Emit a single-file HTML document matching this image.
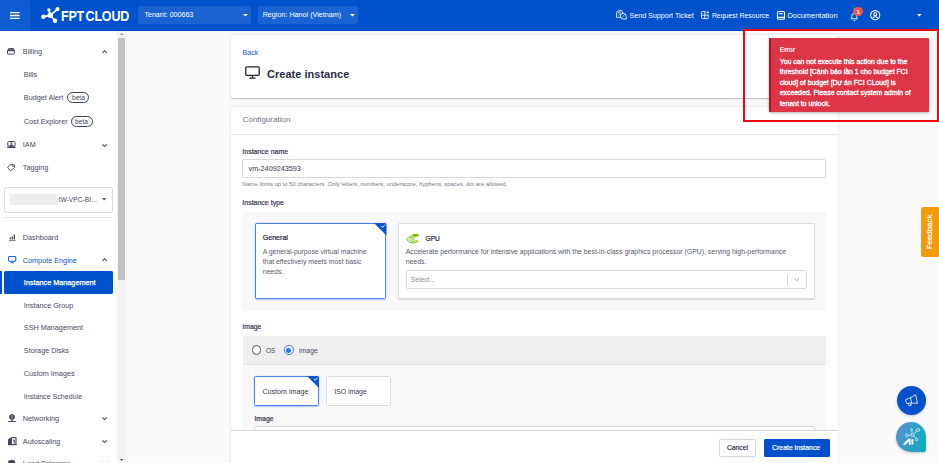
<!DOCTYPE html>
<html>
<head>
<meta charset="utf-8">
<title>Create instance</title>
<style>
*{box-sizing:border-box;margin:0;padding:0}
html,body{width:939px;height:463px;overflow:hidden;background:#fafafa;font-family:"Liberation Sans",sans-serif;}
body{position:relative}
.a{position:absolute}
.t{position:absolute;white-space:nowrap;line-height:10px;font-size:7.25px;color:#474a5d}
.w{color:#fff}
.b{font-weight:bold}
.m{-webkit-text-stroke:.2px}
svg{position:absolute;overflow:visible}
/* header */
#hdr{left:0;top:0;width:939px;height:30.5px;background:#0052cc}
#ham{left:0;top:0;width:30px;height:30.5px;background:#0f5dd0}
.dd{background:#1a63d1;border-radius:2px}
/* sidebar */
#side{left:0;top:30.5px;width:117.500px;height:433px;background:#fff}
#sb{left:117.300px;top:30.5px;width:9.700px;height:433px;background:#f3f3f3}
#sbt{left:118px;top:37.500px;width:7px;height:242.500px;background:#c2c2c2}
.beta{position:absolute;border:0.8px solid #3f4254;border-radius:6px;height:11px;width:22px;font-size:6.6px;line-height:9px;text-align:center;color:#3f4254}
/* cards */
.card{position:absolute;background:#fff;box-shadow:0 0.5px 1.5px rgba(0,0,0,.26);border-radius:2px}
</style>
</head>
<body>

<!-- ================= HEADER ================= -->
<div id="hdr" class="a"></div>
<div id="ham" class="a"></div>
<svg style="left:10.2px;top:11.8px" width="9.6" height="7" viewBox="0 0 9.6 7"><path d="M0 .7h9.6M0 3.5h9.6M0 6.3h9.6" stroke="#fff" stroke-width="1.3" fill="none"/></svg>

<!-- logo -->
<svg style="left:40px;top:6px" width="22" height="19" viewBox="40 6 22 19">
  <g stroke="#fff" stroke-width="1.7" fill="none" stroke-linecap="round">
    <path d="M50.3 15.3L48.9 10M50.3 15.3L57.5 9.1M50.3 15.3L43.4 16.7M50.3 15.3L55.1 20.7"/>
  </g>
  <g fill="#fff">
    <circle cx="50.3" cy="15.3" r="2.7"/><circle cx="48.9" cy="10" r="1.7"/><circle cx="57.5" cy="9.1" r="2.1"/>
    <circle cx="43.4" cy="16.7" r="2.2"/><circle cx="55.1" cy="20.7" r="2.2"/>
  </g>
</svg>
<div class="t w b" id="logo" style="left:61px;top:8.200px;font-size:13.9px;line-height:16px;letter-spacing:-0.2px;word-spacing:-2px;transform-origin:0 50%;transform:scaleX(.9)">FPT CLOUD</div>

<div class="a dd" style="left:138px;top:6.2px;width:113px;height:18.2px"></div>
<div class="t w" style="left:144.4px;top:10.300px;font-size:7.1px">Tenant: 000663</div>
<svg style="left:243.2px;top:14px" width="4.8" height="2.6" viewBox="0 0 4.8 2.6"><path d="M0 0h4.8L2.4 2.6z" fill="#fff"/></svg>
<div class="a dd" style="left:257.5px;top:6.2px;width:100.5px;height:18.2px"></div>
<div class="t w" style="left:262.7px;top:10.2px;font-size:7.18px">Region: Hanoi (Vietnam)</div>
<svg style="left:349.7px;top:14px" width="4.8" height="2.6" viewBox="0 0 4.8 2.6"><path d="M0 0h4.8L2.4 2.6z" fill="#fff"/></svg>

<!-- header right -->
<svg style="left:615.700px;top:10.200px" width="10.700" height="9.300" viewBox="0 0 11.500 10" fill="none" stroke="#fff" stroke-width=".9" stroke-linejoin="round" stroke-linecap="round">
  <path d="M5 7.900H.6V3.900a3.500 3.500 0 0 1 6.900-.9"/><path d="M10.900 9.700H7.800a3.100 3.100 0 1 1 3.100-3.100z" fill="#0052cc"/><path d="M2.300 3.300a1.200 1.200 0 1 1 1.700 1.100c-.4.200-.5.500-.5 1" stroke-width=".8"/><path d="M7.200 7.600l1.800-2.800" stroke-width=".7" stroke-opacity=".8"/>
</svg>
<div class="t w" style="left:629.5px;top:11.100px;font-size:7.14px">Send Support Ticket</div>
<svg style="left:701.4px;top:11px" width="8.2" height="8" viewBox="0 0 8.2 8" fill="none" stroke="#fff" stroke-width=".85">
  <path d="M4.6.6H1.2a.7.7 0 0 0-.7.7v5.6a.7.7 0 0 0 .7.7h5.4a.7.7 0 0 0 .7-.7V3.6M3.8.6v7M.5 4.2h6.8M5.6 1.4h2.4M6.8.2v2.4"/>
</svg>
<div class="t w" style="left:711.9px;top:11.100px;font-size:6.900px">Request Resource</div>
<svg style="left:777.1px;top:10.9px" width="8" height="8.8" viewBox="0 0 8 8.8" fill="none" stroke="#fff" stroke-width="1.100">
  <rect x=".5" y=".5" width="7" height="7.8" rx="1"/><path d="M.5 6.4h7M2.4 2.6h3.2"/>
</svg>
<div class="t w" style="left:787.5px;top:11.100px;font-size:7.450px">Documentation</div>
<!-- bell -->
<svg style="left:850px;top:11.6px" width="8.6" height="9" viewBox="0 0 8.6 9" fill="none" stroke="#fff" stroke-width=".9">
  <path d="M1 6.8c.9-.8.9-1.700.9-3a2.400 2.400 0 0 1 4.800 0c0 1.300 0 2.200.9 3z"/><path d="M3.400 8.200a1 1 0 0 0 1.800 0"/>
</svg>
<div class="a" style="left:853.400px;top:6.900px;width:9.600px;height:9.600px;border-radius:50%;background:#ef5350"></div>
<div class="t w b" style="left:853.400px;top:6.800px;width:9.600px;text-align:center;font-size:6.200px">1</div>
<!-- user -->
<svg style="left:869.900px;top:10.100px" width="10.400" height="10.400" viewBox="0 0 10 10" fill="none" stroke="#fff" stroke-width="1.050">
  <circle cx="5" cy="5" r="4.4"/><circle cx="5" cy="4" r="1.4"/><path d="M2.300 8.200a3 3 0 0 1 5.400 0"/>
</svg>
<svg style="left:916.6px;top:14.1px" width="4.6" height="2.6" viewBox="0 0 4.6 2.6"><path d="M0 0h4.600L2.300 2.600z" fill="#fff"/></svg>

<!-- ================= SIDEBAR ================= -->
<div id="side" class="a"></div>
<div id="sb" class="a"></div>
<div id="sbt" class="a"></div>
<svg style="left:119.700px;top:33px" width="3.4" height="2" viewBox="0 0 3.4 2"><path d="M0 2h3.400L1.700 0z" fill="#888"/></svg>
<svg style="left:119.8px;top:459px" width="3.4" height="2" viewBox="0 0 3.4 2"><path d="M0 0h3.400L1.700 2z" fill="#555"/></svg>

<!-- Billing -->
<svg style="left:7px;top:47.800px" width="8" height="6.600" viewBox="0 0 8 6.600" fill="none" stroke="#3f4254" stroke-width="1">
  <rect x=".55" y="1.900" width="6.900" height="4.200" rx=".7"/><path d="M1.700 1.900V.55h4.600V1.900"/><path d="M.5 2.500h7" stroke-width="1.300"/>
</svg>
<div class="t" style="left:22.8px;top:47.300px">Billing</div>
<svg style="left:101.900px;top:50.200px" width="5.200" height="3.200" viewBox="0 0 5.2 3.200" fill="none" stroke="#3d4163" stroke-width="1.100"><path d="M.4 2.900L2.600.700 4.800 2.900"/></svg>
<div class="t" style="left:23.800px;top:70.100px">Bills</div>
<div class="t" style="left:23.800px;top:92.800px">Budget Alert</div>
<div class="beta" style="left:67.400px;top:92.300px">beta</div>
<div class="t" style="left:23.800px;top:116.500px">Cost Explorer</div>
<div class="beta" style="left:70.500px;top:116.400px">beta</div>
<!-- IAM -->
<svg style="left:7.100px;top:140.900px" width="8.800" height="7.400" viewBox="0 0 8.800 7.400" fill="none" stroke="#3f4254" stroke-width="1">
  <rect x=".8" y=".5" width="7.200" height="4.700" rx=".8"/><circle cx="4.400" cy="2.100" r=".95" fill="#3f4254" stroke="none"/><path d="M2.600 5a1.800 1.800 0 0 1 3.600 0z" fill="#3f4254" stroke="none"/><path d="M.3 6.300h8.200" stroke-width="1.500"/>
</svg>
<div class="t" style="left:22.800px;top:140.300px">IAM</div>
<svg style="left:101.900px;top:143.600px" width="5.200" height="3.200" viewBox="0 0 5.200 3.200" fill="none" stroke="#3d4163" stroke-width="1.100"><path d="M.4.400L2.600 2.600 4.800.4"/></svg>
<!-- Tagging -->
<svg style="left:7px;top:164.300px" width="8" height="7.400" viewBox="0 0 8 7.400" fill="none" stroke="#3f4254" stroke-width=".9">
  <path d="M3.400.800L7.300.5l.1 3.300-3.900 3.100L.6 3.400z"/><circle cx="5.800" cy="2" r=".4"/>
</svg>
<div class="t" style="left:22.800px;top:163.400px">Tagging</div>
<!-- project box -->
<div class="a" style="left:3.900px;top:187px;width:109.400px;height:26px;border:.8px solid #dcdce0;border-radius:2px;background:#fff"></div>
<div class="a" style="left:9.800px;top:193.500px;width:48.500px;height:11.700px;background:#ededed"></div>
<div class="t" style="left:58.600px;top:195.000px;font-size:6.700px">tW-VPC-BI...</div>
<svg style="left:101.900px;top:198.400px" width="4.400" height="2.400" viewBox="0 0 4.400 2.400"><path d="M0 0h4.400L2.200 2.400z" fill="#555866"/></svg>
<div class="a" style="left:3.900px;top:217px;width:109.400px;height:.8px;background:#e6e6ea"></div>
<!-- Dashboard -->
<svg style="left:8.500px;top:234px" width="6.600" height="7" viewBox="0 0 6.600 7" fill="none" stroke="#3f4254" stroke-width="1">
  <path d="M1.300 5.600V3.600M3.300 5.600V2.200M5.300 5.600V.6" stroke-width="1.250"/><path d="M0 6.600h6.600" stroke-width=".7"/>
</svg>
<div class="t" style="left:22.800px;top:232.900px">Dashboard</div>
<!-- Compute Engine -->
<svg style="left:7.600px;top:256.300px" width="8.400" height="7.400" viewBox="0 0 9 8" fill="none" stroke="#1c62d6" stroke-width="1.100">
  <rect x=".6" y=".6" width="7.800" height="5" rx=".8"/><path d="M2.800 7.400h3.400M4.500 5.600v1.800"/>
</svg>
<div class="t" style="left:22.800px;top:255.800px;color:#0a55cf">Compute Engine</div>
<svg style="left:101.900px;top:258.200px" width="5.200" height="3.200" viewBox="0 0 5.200 3.200" fill="none" stroke="#3d4163" stroke-width="1.100"><path d="M.4 2.900L2.600.700 4.800 2.900"/></svg>
<!-- active -->
<div class="a" style="left:0;top:271.400px;width:1.800px;height:22.700px;background:#0052cc"></div>
<div class="a" style="left:3.900px;top:271.400px;width:109.400px;height:22.700px;background:#0052cc;border-radius:1.500px"></div>
<div class="t w" style="left:23.800px;top:278.400px;font-size:7.250px;-webkit-text-stroke:.25px #fff">Instance Management</div>
<div class="t" style="left:23.800px;top:300.900px">Instance Group</div>
<div class="t" style="left:23.800px;top:323.400px">SSH Management</div>
<div class="t" style="left:23.800px;top:346.100px">Storage Disks</div>
<div class="t" style="left:23.800px;top:368.600px">Custom Images</div>
<div class="t" style="left:23.800px;top:391.900px;font-size:7.100px">Instance Schedule</div>
<!-- Networking -->
<svg style="left:7.600px;top:414.300px" width="8" height="8.200" viewBox="0 0 8 8.200" fill="none" stroke="#3f4254" stroke-width=".9">
  <circle cx="4" cy="3" r="2.500" fill="#3f4254"/><path d="M4 1.200v3.400" stroke="#fff" stroke-width=".7"/><path d="M4 5.500v1.700" stroke-width="1.100"/><path d="M.2 7.500h7.600" stroke-width="1"/>
</svg>
<div class="t" style="left:22.800px;top:414.000px">Networking</div>
<svg style="left:101.900px;top:417.400px" width="5.200" height="3.200" viewBox="0 0 5.200 3.200" fill="none" stroke="#3d4163" stroke-width="1.100"><path d="M.4.400L2.600 2.600 4.800.4"/></svg>
<!-- Autoscaling -->
<svg style="left:7.600px;top:437.200px" width="8.600" height="8.200" viewBox="0 0 8.600 8.200">
  <path d="M0 2.400L3.200.2v7.600H0z" fill="#3f4254"/><rect x="3.300" y=".7" width="4.700" height="6.800" fill="none" stroke="#3f4254" stroke-width="1.100"/><path d="M4.800 3.100h1.500v3.400" fill="none" stroke="#3f4254" stroke-width="1"/><path d="M0 7.700h8.600" stroke="#3f4254" stroke-width="1"/>
</svg>
<div class="t" style="left:22.800px;top:436.800px">Autoscaling</div>
<svg style="left:101.900px;top:440.200px" width="5.200" height="3.200" viewBox="0 0 5.200 3.200" fill="none" stroke="#3d4163" stroke-width="1.100"><path d="M.4.400L2.600 2.600 4.800.4"/></svg>
<!-- Load Balancer (cut off) -->
<svg style="left:7.800px;top:460.200px" width="7.400" height="8" viewBox="0 0 7.400 8" fill="#3f4254"><circle cx="1.600" cy="1.500" r="1.300"/><circle cx="3.700" cy="1" r="1.300"/><circle cx="5.800" cy="1.500" r="1.300"/><rect x=".4" y="1.800" width="6.600" height="4"/></svg>
<div class="t" style="left:22.800px;top:459.300px">Load Balancer</div>
<svg style="left:101.900px;top:462.400px" width="5.200" height="3.200" viewBox="0 0 5.200 3.200" fill="none" stroke="#9a9ca8" stroke-width="1"><path d="M.4.400L2.600 2.600 4.800.4"/></svg>

<!-- ================= MAIN ================= -->
<!-- card 1 -->
<div class="card" style="left:231px;top:35px;width:607px;height:62.500px"></div>
<div class="t" style="left:242.600px;top:48px;color:#0a55cf;font-size:7.100px">Back</div>
<svg style="left:245px;top:66.300px" width="15" height="13" viewBox="0 0 15 13" fill="none" stroke="#26272c" stroke-width="1.300">
  <rect x=".8" y=".8" width="13.400" height="8.600" rx="1"/><path d="M4.400 12.200h6.200M7.500 9.400v2.800"/>
</svg>
<div class="t b" style="left:267px;top:66.900px;font-size:11.050px;line-height:15px;color:#2a2e44">Create instance</div>

<!-- card 2 -->
<div class="card" style="left:231px;top:106.700px;width:607px;height:370px"></div>
<div class="t" style="left:242.600px;top:115px;font-size:8.050px;color:#70737f">Configuration</div>
<div class="a" style="left:231px;top:133.800px;width:607px;height:.8px;background:#e9e9ec"></div>

<div class="t m" style="left:242.300px;top:146.800px;font-size:7px;color:#33364a">Instance name</div>
<div class="a" style="left:242.300px;top:159.400px;width:584px;height:18.300px;border:.8px solid #d7d7dc;border-radius:1.500px;background:#fff"></div>
<div class="t" style="left:248.500px;top:164.100px;font-size:7.260px;color:#33364a">vm-2409243593</div>
<div class="t" style="left:242.300px;top:179.300px;font-size:5.850px;color:#777a86">Name limits up to 50 characters. Only letters, numbers, underscore, hyphens, spaces, dot are allowed.</div>
<div class="t m" style="left:242.300px;top:197.600px;font-size:7px;color:#33364a">Instance type</div>

<!-- instance type panel -->
<div class="a" style="left:242.800px;top:211.500px;width:583.500px;height:99.500px;background:#f8f8f8"></div>
<div class="a" style="left:255px;top:223.300px;width:131px;height:75.700px;border:.9px solid #4a82e4;border-radius:1.500px;background:#fff;box-shadow:0 .5px 1.500px rgba(11,79,211,.3)"></div>
<svg style="left:373.500px;top:223.300px" width="12.500" height="12.500" viewBox="0 0 11 11"><path d="M0 0h9.500a1.500 1.500 0 0 1 1.500 1.500V11z" fill="#0a55cf"/><path d="M6.400 2.700l1.200 1.200 2-2.400" fill="none" stroke="#fff" stroke-width=".8"/></svg>
<div class="t m" style="left:262.700px;top:232.900px;font-size:7.100px;color:#23263a">General</div>
<div class="t" style="left:262.700px;top:247.300px;font-size:6.850px;line-height:9.750px;color:#565968">A general-purpose virtual machine<br>that effectively meets most basic<br>needs.</div>

<div class="a" style="left:397.500px;top:223.300px;width:417.300px;height:75.500px;border:.8px solid #dcdce0;border-radius:1.500px;background:#fff;box-shadow:0 .5px 1px rgba(0,0,0,.12)"></div>
<!-- nvidia-like icon -->
<svg style="left:405.600px;top:233.700px" width="12.800" height="9.600" viewBox="0 0 12.800 9.600" fill="none" stroke="#76b900">
  <path d="M7 0h5.400v2.400H7z" fill="#76b900" stroke="none"/>
  <path d="M12.300 1.500C7.500.7 2.300 2.600.7 5.200 2.200 8 5.200 9.400 8.200 8.800l4.100-1.300" stroke-width="1"/>
  <path d="M10 3C6.500 2.600 3.900 3.800 3 5.200c1 1.700 3.100 2.500 5.500 2l2.800-1" stroke-width=".8"/>
  <ellipse cx="6.900" cy="5" rx="1.500" ry="1.100" stroke-width=".7"/>
</svg>
<div class="t m" style="left:425.500px;top:233.600px;font-size:6.600px;color:#23263a">GPU</div>
<div class="t" style="left:405.700px;top:247.200px;font-size:6.900px;line-height:9.750px;color:#565968">Accelerate performance for intensive applications with the best-in-class graphics processor (GPU), serving high-performance<br>needs.</div>
<div class="a" style="left:405.700px;top:270.400px;width:401px;height:18.800px;border:.8px solid #d9d9de;border-radius:1.500px;background:#fff"></div>
<div class="t" style="left:410.800px;top:274.500px;font-size:6.700px;color:#888b96">Select...</div>
<div class="a" style="left:787.300px;top:275px;width:.8px;height:9.500px;background:#cfcfd5"></div>
<svg style="left:794.400px;top:278.100px" width="5.600" height="3.200" viewBox="0 0 5.600 3.200" fill="none" stroke="#a9abb6" stroke-width="1"><path d="M.4.400L2.800 2.700 5.200.4"/></svg>

<!-- image section -->
<div class="t m" style="left:242.300px;top:322.300px;font-size:6.900px;color:#33364a">Image</div>
<div class="a" style="left:242.800px;top:336.300px;width:583.500px;height:27.600px;background:#efefef"></div>
<div class="a" style="left:242.800px;top:363.900px;width:583.500px;height:80px;background:#f8f8f8;border-top:.7px solid #e4e4e6"></div>
<div class="a" style="left:251.500px;top:345.400px;width:9.800px;height:9.800px;border-radius:50%;border:1.250px solid #54576f;background:#fff"></div>
<div class="t" style="left:266px;top:346px;font-size:6.500px">OS</div>
<div class="a" style="left:283.900px;top:345.400px;width:9.800px;height:9.800px;border-radius:50%;border:1.250px solid #2b78ee;background:#fff"></div>
<div class="a" style="left:286.300px;top:347.800px;width:5px;height:5px;border-radius:50%;background:#2b78ee"></div>
<div class="t" style="left:298.700px;top:346px;font-size:6.900px">Image</div>

<div class="a" style="left:254.400px;top:376.100px;width:64.500px;height:29.800px;border:.9px solid #4a82e4;border-radius:1.500px;background:#fff;box-shadow:0 .5px 1.500px rgba(11,79,211,.3)"></div>
<svg style="left:306.900px;top:376.100px" width="12" height="12" viewBox="0 0 11 11"><path d="M0 0h9.500a1.500 1.500 0 0 1 1.500 1.500V11z" fill="#0a55cf"/><path d="M6.400 2.700l1.200 1.200 2-2.400" fill="none" stroke="#fff" stroke-width=".8"/></svg>
<div class="t" style="left:262.400px;top:386.700px;font-size:7.150px;color:#33364a">Custom image</div>
<div class="a" style="left:326px;top:376.100px;width:64.700px;height:29.800px;border:.8px solid #d9d9de;border-radius:1.500px;background:#fff"></div>
<div class="t" style="left:334.400px;top:386.700px;font-size:6.850px;color:#33364a">ISO image</div>
<div class="t m" style="left:254.400px;top:413.500px;font-size:6.900px;color:#33364a">Image</div>
<div class="a" style="left:254.400px;top:426.300px;width:560.200px;height:18px;border:.8px solid #d9d9de;border-radius:1.500px;background:#fff"></div>

<!-- footer bar -->
<div class="a" style="left:231px;top:430px;width:607px;height:33px;background:#fff;border-top:.8px solid #d8d8dc"></div>
<div class="a" style="left:719.300px;top:438.600px;width:36.400px;height:18px;border:.8px solid #d4d4da;border-radius:1.500px;background:#fff"></div>
<div class="t m" style="left:719.300px;top:442.500px;width:36.400px;text-align:center;font-size:6.800px;color:#33364a">Cancel</div>
<div class="a" style="left:763.900px;top:438.600px;width:66.400px;height:18px;border-radius:1.500px;background:#0052cc"></div>
<div class="t w m" style="left:762.800px;top:442.500px;width:66.700px;text-align:center;font-size:6.870px">Create instance</div>

<!-- right rail line -->
<div class="a" style="left:936.800px;top:30.500px;width:2.200px;height:433px;background:#fdfdfd"></div>

<!-- feedback tab -->
<div class="a" style="left:921.200px;top:206.800px;width:18px;height:50.200px;background:#f39a0b;border-radius:2.500px 0 0 2.500px"></div>
<div class="t w" style="left:930.200px;top:232px;font-size:7.900px;line-height:10px;-webkit-text-stroke:.2px;transform:translate(-50%,-50%) rotate(-90deg)">Feedback</div>

<!-- floating buttons -->
<div class="a" style="left:896.700px;top:385.600px;width:29.600px;height:29.600px;border-radius:50%;background:#0450cd;box-shadow:0 1px 3px rgba(0,0,0,.22)"></div>
<svg style="left:894px;top:383px" width="35" height="34" viewBox="0 0 35 34" fill="none" stroke="#fff" stroke-opacity=".88" stroke-width=".9" stroke-linejoin="round" stroke-linecap="round">
  <path d="M11.800 16.700L16.500 14.700 17.600 20 13.200 20.500z"/><path d="M16.500 14.700L21.600 11.700 23.500 20.300 17.600 20"/><path d="M14 20.400l1 2.300 2.200-.4-.6-2.200"/>
</svg>
<div class="a" style="left:895.900px;top:421.700px;width:30.400px;height:30px;border-radius:15.200px 15.200px 2px 15.200px;background:linear-gradient(105deg,#5c8fd0 0%,#3a9cc9 40%,#1ba8c2 75%,#14aab8 100%);box-shadow:0 1px 3px rgba(0,0,0,.22)"></div>
<svg style="left:894px;top:419px" width="35" height="36" viewBox="0 0 35 36" fill="none" stroke="#fff" stroke-opacity=".9" stroke-width=".75">
  <circle cx="18.500" cy="15.900" r="1.500"/><circle cx="17.500" cy="10.500" r="1"/><circle cx="24.100" cy="10.900" r="1.500"/><circle cx="12.800" cy="16.500" r="1.400"/><circle cx="22.600" cy="20.400" r="1.300"/>
  <path d="M18.200 14.400l-.5-2.900M19.600 14.900l3.400-3M17 16.100l-2.800.3M19.600 16.900l2 2.600"/>
  <path d="M8.600 25.700L14.200 19.800h2.500v5.900h-1.900v-3.400l-3.300 3.400z" fill="#fff" stroke="none"/><path d="M17.500 20.300h1.800v5.400h-1.800z" fill="#fff" stroke="none"/>
</svg>

<!-- ================= ERROR OVERLAY ================= -->
<div class="a" style="left:742.600px;top:29px;width:196.800px;height:93px;border:2px solid #f4080d"></div>
<div class="a" style="left:768.600px;top:38.400px;width:160.300px;height:73.600px;background:#dc3545;border-left:2.600px solid #b5111f;border-radius:1px;box-shadow:0 1px 3px rgba(0,0,0,.3)"></div>
<div class="t w m" style="left:779.700px;top:44.900px;font-size:6.900px">Error</div>
<div class="t w m" style="left:779.700px;top:57px;font-size:6.900px;line-height:10.370px;-webkit-text-stroke:.3px">You can not execute this action due to the<br>threshold [Cảnh báo lần 1 cho budget FCI<br>cloud] of budget [Dự án FCI CLoud] is<br>exceeded. Please contact system admin of<br>tenant to unlock.</div>

</body>
</html>
